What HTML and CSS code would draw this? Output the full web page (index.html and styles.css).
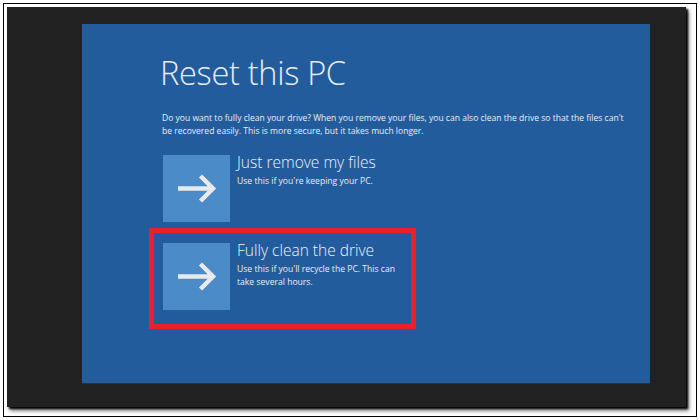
FILE: index.html
```html
<!DOCTYPE html>
<html>
<head>
<meta charset="utf-8">
<link rel="stylesheet" href="styles.css">
</head>
<body>
<div class="outer">
  <div class="dark">
    <div class="blue">
      <h1 class="title">Reset this PC</h1>
      <p class="desc">Do you want to fully clean your drive? When you remove your files, you can also clean the drive so that the files can't be recovered easily. This is more secure, but it takes much longer.</p>
      <div class="options">
        <div class="option">
          <div class="tile">
            <svg width="67" height="67" viewBox="0 0 67 67"><path d="M15 33.5H50M37.5 21L50 33.5L37.5 46" fill="none" stroke="#e8eaec" stroke-width="4.5" stroke-linecap="butt"/></svg>
          </div>
          <div class="text">
            <div class="opt-title">Just remove my files</div>
            <div class="opt-sub">Use this if you're keeping your PC.</div>
          </div>
        </div>
        <div class="option selected">
          <div class="tile">
            <svg width="67" height="67" viewBox="0 0 67 67"><path d="M15 33.5H50M37.5 21L50 33.5L37.5 46" fill="none" stroke="#e8eaec" stroke-width="4.5" stroke-linecap="butt"/></svg>
          </div>
          <div class="text">
            <div class="opt-title">Fully clean the drive</div>
            <div class="opt-sub">Use this if you'll recycle the PC. This can take several hours.</div>
          </div>
        </div>
      </div>
    </div>
  </div>
</div>
</body>
</html>
```
FILE: styles.css
```css
html, body {
  margin: 0;
  padding: 0;
  background: #ffffff;
}
body {
  width: 700px;
  height: 420px;
  overflow: hidden;
  font-family: "Open Sans", "Noto Sans", "Liberation Sans", sans-serif;
}
.outer {
  margin: 3px;
  border: 1px solid #000;
  padding: 3px 0 0 3px;
  box-sizing: border-box;
  width: 694px;
  height: 414px;
}
.dark {
  width: 679px;
  height: 400px;
  background: #212121;
  box-shadow: 2px 2px 2px #000, 3px 4px 4px #888;
  padding: 17px 0 0 75px;
  box-sizing: border-box;
}
.blue {
  width: 568px;
  height: 359px;
  background: #235c9d;
  box-shadow: 0 1px 1px #1a3656;
  padding: 29px 0 0 78px;
  box-sizing: border-box;
  color: #e9eef4;
}
.title {
  margin: 0;
  font-weight: 300;
  font-size: 32.5px;
  line-height: 40px;
  letter-spacing: -0.3px;
  color: #e6ecf3;
}
.desc {
  margin: 19px 0 0 2px;
  width: 464px;
  font-size: 8.55px;
  line-height: 12.5px;
  color: #e9eef4;
}
.options {
  margin-top: 18px;
  margin-left: 3px;
  display: flex;
  flex-direction: column;
  gap: 20px;
}
.option {
  display: flex;
  gap: 7px;
  position: relative;
}
.option.selected {
  margin-top: 1px;
}
.option.selected::before {
  content: "";
  position: absolute;
  left: -14px;
  top: -15px;
  width: 267px;
  height: 101px;
  border: 5px solid #e8212b;
  box-sizing: border-box;
}
.tile {
  width: 67px;
  height: 67px;
  background: #4b8bc8;
  display: flex;
}
.opt-title {
  font-weight: 300;
  font-size: 15.5px;
  line-height: 16px;
  color: #eef2f7;
  margin-top: -1px;
}
.opt-sub {
  margin-top: 5px;
  width: 170px;
  font-size: 8.6px;
  line-height: 13px;
  color: #e9eef4;
}
```
